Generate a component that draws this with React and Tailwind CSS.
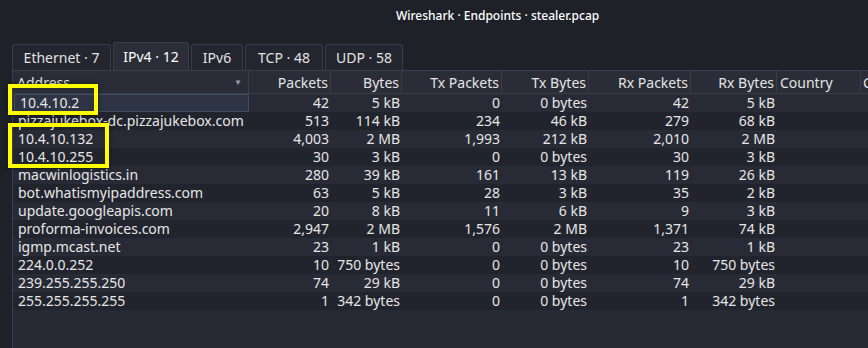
import React from 'react';

const tabs = [
  { label: 'Ethernet · 7', w: 'w-[99px]' },
  { label: 'IPv4 · 12', w: 'w-[76px]', active: true },
  { label: 'IPv6', w: 'w-[52px]' },
  { label: 'TCP · 48', w: 'w-[78px]' },
  { label: 'UDP · 58', w: 'w-[78px]' },
];

const columns = ['Packets', 'Bytes', 'Tx Packets', 'Tx Bytes', 'Rx Packets', 'Rx Bytes'];

const rows = [
  ['10.4.10.2', '42', '5 kB', '0', '0 bytes', '42', '5 kB'],
  ['pizzajukebox-dc.pizzajukebox.com', '513', '114 kB', '234', '46 kB', '279', '68 kB'],
  ['10.4.10.132', '4,003', '2 MB', '1,993', '212 kB', '2,010', '2 MB'],
  ['10.4.10.255', '30', '3 kB', '0', '0 bytes', '30', '3 kB'],
  ['macwinlogistics.in', '280', '39 kB', '161', '13 kB', '119', '26 kB'],
  ['bot.whatismyipaddress.com', '63', '5 kB', '28', '3 kB', '35', '2 kB'],
  ['update.googleapis.com', '20', '8 kB', '11', '6 kB', '9', '3 kB'],
  ['proforma-invoices.com', '2,947', '2 MB', '1,576', '2 MB', '1,371', '74 kB'],
  ['igmp.mcast.net', '23', '1 kB', '0', '0 bytes', '23', '1 kB'],
  ['224.0.0.252', '10', '750 bytes', '0', '0 bytes', '10', '750 bytes'],
  ['239.255.255.250', '74', '29 kB', '0', '0 bytes', '74', '29 kB'],
  ['255.255.255.255', '1', '342 bytes', '0', '0 bytes', '1', '342 bytes'],
];

const gridCols = 'grid grid-cols-[236px_82px_71px_100px_87px_102px_86px_84px_1fr]';

export default function App() {
  return (
    <div
      className="relative w-[868px] h-[348px] overflow-hidden bg-[#1f2129] text-[#e6e6e6] flex flex-col"
      style={{ fontFamily: '"Noto Sans", "Open Sans", sans-serif' }}
    >
      {/* Title bar */}
      <div className="h-[31px] flex items-center pl-[396px] text-[12px] font-medium text-white">
        Wireshark · Endpoints · stealer.pcap
      </div>

      {/* Tabs */}
      <div className="flex items-end gap-[2px] pl-[12px] h-[39px]">
        {tabs.map((t) => (
          <div
            key={t.label}
            className={`${t.w} flex items-center justify-center text-[14px] border border-b-0 border-[#3a3d48] rounded-t-[3px] ${
              t.active ? 'h-[28px] bg-[#2b2e38] text-white' : 'h-[26px] bg-[#24262f] text-[#e2e2e2]'
            }`}
          >
            {t.label}
          </div>
        ))}
      </div>

      {/* Table */}
      <div className="flex-1 ml-[12px] border-l border-t border-[#3c3f4a] bg-[#272a34]">
        <div className={`${gridCols} h-[23px] bg-[#2a2d37] border-b border-[#3a3d47] text-[14px] text-[#e4e4e4]`}>
          <div className="flex items-center justify-between pl-[4px] pr-[6px] border-r border-[#3a3d47]">
            <span>Address</span>
            <span className="text-[8px] text-[#9a9ca4]">▼</span>
          </div>
          {columns.map((c) => (
            <div key={c} className="flex items-center justify-end pr-[2px] border-r border-[#3a3d47]">
              {c}
            </div>
          ))}
          <div className="flex items-center pl-[3px] border-r border-[#3a3d47]">Country</div>
          <div className="flex items-center pl-[2px]">C</div>
        </div>

        {rows.map((r, i) => (
          <div
            key={r[0]}
            className={`${gridCols} h-[18px] text-[14px] leading-[18px] ${i % 2 === 1 ? 'bg-[#22242d]' : 'bg-[#282b35]'}`}
          >
            <div className={`pl-[5px] whitespace-nowrap ${i === 0 ? 'ml-[1px] pl-[3px] bg-[#2e3444] border border-[#3e4c66] leading-[16px]' : ''}`}>
              {r[0]}
            </div>
            {r.slice(1).map((v, j) => (
              <div key={j} className="text-right pr-[2px] whitespace-nowrap">
                {v}
              </div>
            ))}
            <div />
            <div />
          </div>
        ))}
      </div>

      {/* Annotation boxes */}
      <div className="absolute left-[8px] top-[84px] w-[90px] h-[31px] border-[4px] border-[#ffff00] shadow-[0_0_4px_rgba(0,0,0,0.6)]" />
      <div className="absolute left-[8px] top-[123px] w-[101px] h-[45px] border-[4px] border-[#ffff00] shadow-[0_0_4px_rgba(0,0,0,0.6)]" />
    </div>
  );
}
